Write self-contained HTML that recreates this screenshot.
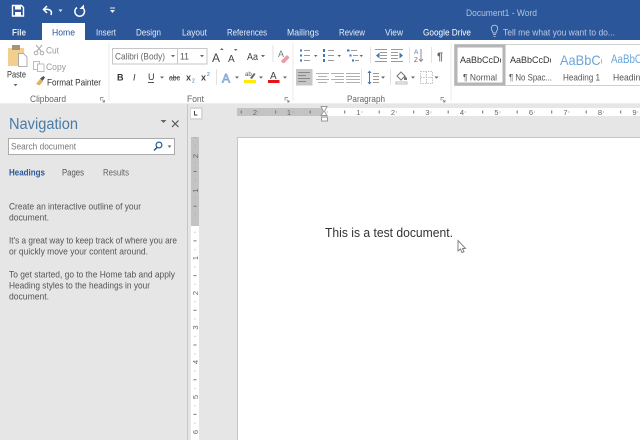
<!DOCTYPE html>
<html><head><meta charset="utf-8"><style>
html,body{margin:0;padding:0;width:640px;height:440px;overflow:hidden;background:#e6e6e6}
svg{display:block}
#r{filter:blur(.3px)}
text{font-family:"Liberation Sans",sans-serif;font-size:9px;fill:#444;white-space:pre}
.tab{fill:#e4ebf5;font-size:9.5px}
.g{fill:#666;font-size:9.500px}
.arr{fill:#666}
.rn{font-size:7.500px;fill:#666;text-anchor:middle}
.st{font-size:9.500px;fill:#555}
.nv{font-size:9.300px;fill:#555}
</style></head><body>
<svg id="r" width="640" height="440" viewBox="0 0 640 440" xmlns="http://www.w3.org/2000/svg">
<!-- backgrounds -->
<rect width="640" height="440" fill="#e6e6e6"/>
<rect width="640" height="40" fill="#2b579a"/>
<rect y="40" width="640" height="64" fill="#fff"/>
<rect y="103" width="640" height="1" fill="#eee"/>
<!-- QAT -->
<path d="M12.500 5.500h9l2 2v8.500h-11z" fill="none" stroke="#fff" stroke-width="1.400"/>
<rect x="15" y="6" width="6" height="3.500" fill="#fff"/><rect x="15" y="12" width="6" height="4" fill="#fff"/>
<path d="M51 15c1.500-4-1-6.500-7-5.500M47 6l-3.500 3.500L47 13" fill="none" stroke="#fff" stroke-width="1.500"/>
<path d="M58.500 9.500h4l-2 2.500z" fill="#e4ebf5"/>
<path d="M77 7.500a4.800 4.800 0 1 0 6 0.500" fill="none" stroke="#fff" stroke-width="1.500"/><path d="M84 4.500v4.500h-4.500z" fill="#fff"/>
<rect x="110" y="7.500" width="5" height="1" fill="#e4ebf5"/><path d="M110 10h5l-2.500 3z" fill="#e4ebf5"/>
<text x="466" y="16" textLength="71" lengthAdjust="spacingAndGlyphs" style="fill:#afc1dd;font-size:9.500px">Document1 - Word</text>
<!-- Tabs -->
<rect x="42" y="23" width="43" height="18" fill="#fff"/>
<text class="tab" x="12" y="35.500" textLength="14" lengthAdjust="spacingAndGlyphs" style="font-weight:bold">File</text>
<text x="52" y="35.500" textLength="23" lengthAdjust="spacingAndGlyphs" style="fill:#2b579a;font-size:9.500px">Home</text>
<text class="tab" x="96" y="35.500" textLength="20" lengthAdjust="spacingAndGlyphs">Insert</text>
<text class="tab" x="136" y="35.500" textLength="25" lengthAdjust="spacingAndGlyphs">Design</text>
<text class="tab" x="182" y="35.500" textLength="25" lengthAdjust="spacingAndGlyphs">Layout</text>
<text class="tab" x="227" y="35.500" textLength="40" lengthAdjust="spacingAndGlyphs">References</text>
<text class="tab" x="287" y="35.500" textLength="32" lengthAdjust="spacingAndGlyphs">Mailings</text>
<text class="tab" x="339" y="35.500" textLength="26" lengthAdjust="spacingAndGlyphs">Review</text>
<text class="tab" x="385" y="35.500" textLength="18" lengthAdjust="spacingAndGlyphs">View</text>
<text x="423" y="35.500" textLength="48" lengthAdjust="spacingAndGlyphs" style="fill:#fff;font-size:9.500px">Google Drive</text>
<path d="M493 34.500h3M493.500 36.500h2M493 33c0-2-1.700-2.500-1.700-4.700a3.200 3.200 0 0 1 6.400 0c0 2.200-1.700 2.700-1.700 4.700z" fill="none" stroke="#c5d3e8" stroke-width=".8"/>
<text x="503" y="35.500" textLength="112" lengthAdjust="spacingAndGlyphs" style="fill:#b9c9e0;font-size:9.500px">Tell me what you want to do...</text>

<!-- Clipboard group -->
<rect x="8" y="48" width="16" height="18" fill="#f3cf8e"/>
<rect x="12" y="45" width="8" height="5" fill="#a39579"/>
<path d="M18.500 53.500h5l3.500 3.500v9.500h-8.500z" fill="#fff" stroke="#999" stroke-width=".8"/>
<text x="7" y="77.500" textLength="19" lengthAdjust="spacingAndGlyphs" style="fill:#333;font-size:9.500px">Paste</text>
<path d="M13.500 84h4l-2 2.200z" class="arr"/>
<g fill="none" stroke="#aaa" stroke-width="1"><circle cx="36" cy="53" r="1.800"/><circle cx="42" cy="53" r="1.800"/><path d="M37 51l5-6M41 51l-5-6"/></g>
<text x="46" y="53.500" textLength="13" lengthAdjust="spacingAndGlyphs" style="fill:#999;font-size:9.500px">Cut</text>
<g fill="#fff" stroke="#b5b5b5" stroke-width=".9"><rect x="33.500" y="61.500" width="6" height="8"/><rect x="37.500" y="64" width="6.500" height="7.500"/></g>
<text x="46" y="70" textLength="20" lengthAdjust="spacingAndGlyphs" style="fill:#999;font-size:9.500px">Copy</text>
<path d="M36 84l4-5 3 2.500-3.500 4z" fill="#e2b25c"/><path d="M40 78.500l3.500-2.500 1.500 1.500-2.500 3.500z" fill="#555"/>
<text x="47" y="85.500" textLength="54" lengthAdjust="spacingAndGlyphs" style="fill:#333;font-size:9.500px">Format Painter</text>
<text class="g" x="30" y="102" textLength="36" lengthAdjust="spacingAndGlyphs">Clipboard</text>
<path d="M100.500 100.500v-3h3M102 99.500l2.500 2.500M104.500 100v2h-2" fill="none" stroke="#777" stroke-width=".7"/>
<rect x="108.500" y="43" width="1" height="58" fill="#e8e8e8"/>

<!-- Font group -->
<rect x="112.500" y="48.500" width="65" height="15.500" fill="#fff" stroke="#c6c6c6"/>
<rect x="177.500" y="48.500" width="29.500" height="15.500" fill="#fff" stroke="#c6c6c6"/>
<text x="115" y="59.500" textLength="50" lengthAdjust="spacingAndGlyphs" style="fill:#666;font-size:9.500px">Calibri (Body)</text>
<path d="M171 55h4l-2 2.200z" class="arr"/>
<text x="180" y="59.500" textLength="9" lengthAdjust="spacingAndGlyphs" style="fill:#555;font-size:9.500px">11</text>
<path d="M200 55h4l-2 2.200z" class="arr"/>
<text x="212" y="62" style="font-size:12px;fill:#444">A</text><path d="M220 50l1.800-2 1.800 2z" fill="#2b6cb0"/>
<text x="228" y="62" style="font-size:10px;fill:#444">A</text><path d="M234 49h3.500l-1.800 2z" fill="#2b6cb0"/>
<text x="247" y="60" textLength="11" lengthAdjust="spacingAndGlyphs" style="font-size:10px;fill:#444">Aa</text>
<path d="M261 55h4l-2 2.200z" class="arr"/>
<rect x="272.500" y="45" width="1" height="17" fill="#e2e2e2"/>
<text x="278" y="57" style="font-size:9px;fill:#777">A</text><path d="M281 61l6-6 2.500 2.500-5 5.500h-2z" fill="#ec9aa2"/>
<text x="117" y="80.500" style="font-size:9px;font-weight:bold;fill:#333">B</text>
<text x="133" y="80.500" style="font-size:9px;font-style:italic;fill:#333">I</text>
<text x="148" y="80" style="font-size:9px;fill:#333">U</text><rect x="148" y="82" width="6" height="1" fill="#555"/>
<path d="M160 76.500h4l-2 2.200z" class="arr"/>
<text x="169" y="80.500" textLength="11" lengthAdjust="spacingAndGlyphs" style="fill:#444;font-size:8.500px;text-decoration:line-through">abc</text>
<text x="186" y="80.500" style="font-weight:bold;fill:#444">x</text><text x="192" y="82.500" style="font-size:5px;fill:#2b6cb0">2</text>
<text x="201" y="80.500" style="font-weight:bold;fill:#444">x</text><text x="207" y="76" style="font-size:5px;fill:#2b6cb0">2</text>
<rect x="216" y="69" width="1" height="16" fill="#e2e2e2"/>
<text x="222" y="82.500" style="font-size:12px;fill:#e6eff9;stroke:#6f9cd0;stroke-width:.7">A</text>
<path d="M235 76.500h4l-2 2.200z" class="arr"/>
<text x="245" y="76" style="font-size:6px;fill:#555">ab</text><path d="M250 78l4-5 1.500 1-3.500 5z" fill="#666"/><rect x="244" y="80" width="12" height="3" fill="#ffea00"/>
<path d="M259 76.500h4l-2 2.200z" class="arr"/>
<text x="270" y="79" style="font-size:10px;fill:#444">A</text><rect x="268" y="80" width="11.500" height="3" fill="#e5141b"/>
<path d="M283 76.500h4l-2 2.200z" class="arr"/>
<text class="g" x="187" y="102" textLength="17" lengthAdjust="spacingAndGlyphs">Font</text>
<path d="M285 100.500v-3h3M286.500 99.500l2.500 2.500M289 100v2h-2" fill="none" stroke="#777" stroke-width=".7"/>
<rect x="292.500" y="43" width="1" height="58" fill="#e8e8e8"/>

<!-- Paragraph group -->
<g stroke="#999" stroke-width="1">
<path d="M304 50.500h6M304 55.500h6M304 60.500h6"/>
<path d="M328 50.500h6M328 55.500h6M328 60.500h6"/>
<path d="M351 50.500h6M353 55.500h5M355 60.500h4"/>
<path d="M375 49.500h12M380 52.500h7M380 55.500h7M380 58.500h7M375 61.500h12"/>
<path d="M391 49.500h12M391 52.500h7M391 55.500h7M391 58.500h7M391 61.500h12"/>
</g>
<g fill="#3b78b8"><rect x="300" y="49.500" width="2" height="2"/><rect x="300" y="54.500" width="2" height="2"/><rect x="300" y="59.500" width="2" height="2"/>
<rect x="323" y="49" width="2" height="3"/><rect x="323" y="54" width="2" height="3"/><rect x="323" y="59" width="2" height="3"/>
<rect x="347" y="49.500" width="2.500" height="2"/><rect x="349.500" y="54.500" width="2" height="2"/><rect x="352" y="59.500" width="2" height="2"/>
<path d="M376 55.500l3.500-3v6zM403 55.500l-3.500-3v6z"/></g>
<path d="M314 55h3.500l-1.800 2zM337.500 55h3.500l-1.800 2zM359.500 55h3.500l-1.800 2z" class="arr"/>
<rect x="370" y="47" width="1" height="16" fill="#e2e2e2"/><rect x="409" y="47" width="1" height="16" fill="#e2e2e2"/><rect x="431" y="47" width="1" height="16" fill="#e2e2e2"/>
<text x="414" y="54" style="font-size:6.500px;fill:#3b78b8">A</text><text x="414" y="62" style="font-size:6.500px;fill:#c0392b">Z</text>
<path d="M421 49v12M419 59l2 2.500 2-2.500" fill="none" stroke="#888"/>
<text x="437" y="60" style="font-size:11px;font-weight:bold;fill:#666">¶</text>
<rect x="296" y="69" width="16.500" height="16.500" fill="#c6c6c6"/>
<g stroke="#888" stroke-width="1">
<path d="M298 72.500h12M298 75.500h8M298 78.500h12M298 81.500h8"/>
</g>
<g stroke="#b0b0b0" stroke-width="1">
<path d="M316 73.500h13M318 76.500h9M316 79.500h13M318 82.500h9"/>
<path d="M331 73.500h13M335 76.500h9M331 79.500h13M335 82.500h9"/>
<path d="M346 73.500h14M346 76.500h14M346 79.500h14M346 82.500h14"/>
</g>
<rect x="361" y="69" width="1" height="16" fill="#e2e2e2"/>
<path d="M369.500 71v13" stroke="#3b78b8" fill="none"/><path d="M367.500 73l2-2.500 2 2.500zM367.500 82l2 2.500 2-2.500z" fill="#3b78b8"/>
<path d="M373 73.500h6M373 76.500h6M373 79.500h6M373 82.500h6" stroke="#999"/>
<path d="M381 76.500h4l-2 2.200z" class="arr"/>
<rect x="390" y="69" width="1" height="16" fill="#e2e2e2"/>
<path d="M397 76l4-4 4 4-4 4z" fill="#fff" stroke="#777"/><path d="M404 75l3 3v2h-3z" fill="#777"/><rect x="396" y="82" width="11" height="2" fill="none" stroke="#aaa" stroke-width=".8"/>
<path d="M411 76.500h4l-2 2.200z" class="arr"/>
<path d="M420.500 71.500h12v12h-12zM426.500 71.500v12M420.500 77.500h12" fill="none" stroke="#c2c2c2" stroke-dasharray="1.500 1"/>
<path d="M434.500 76.500h4l-2 2.200z" class="arr"/>
<text class="g" x="347" y="102" textLength="38" lengthAdjust="spacingAndGlyphs">Paragraph</text>
<path d="M441 100.500v-3h3M442.500 99.500l2.500 2.500M445 100v2h-2" fill="none" stroke="#777" stroke-width=".7"/>
<rect x="450.500" y="43" width="1" height="58" fill="#e8e8e8"/>

<!-- Styles gallery -->
<rect x="454.500" y="44.500" width="190" height="41" fill="#fff" stroke="#d0d0d0"/>
<rect x="456" y="46" width="48" height="38" fill="#fff" stroke="#b5b5b5" stroke-width="3"/>
<svg x="460" y="50" width="41" height="20"><text x="0" y="13" textLength="44" lengthAdjust="spacingAndGlyphs" style="font-size:9.500px;fill:#333">AaBbCcDc</text></svg>
<text class="st" x="463" y="80.500" textLength="34" lengthAdjust="spacingAndGlyphs">¶ Normal</text>
<svg x="510" y="50" width="41" height="20"><text x="0" y="13" textLength="44" lengthAdjust="spacingAndGlyphs" style="font-size:9.500px;fill:#333">AaBbCcDc</text></svg>
<text class="st" x="509" y="80.500" textLength="43" lengthAdjust="spacingAndGlyphs">¶ No Spac...</text>
<svg x="560" y="48" width="42" height="24"><text x="0" y="17" textLength="47" lengthAdjust="spacingAndGlyphs" style="font-size:14px;fill:#6aa5da">AaBbCc</text></svg>
<text class="st" x="563" y="80.500" textLength="37" lengthAdjust="spacingAndGlyphs">Heading 1</text>
<svg x="611" y="48" width="29" height="24"><text x="0" y="15" textLength="31" lengthAdjust="spacingAndGlyphs" style="font-size:11.500px;fill:#6aa5da">AaBbC</text></svg>
<text class="st" x="613" y="80.500" textLength="32" lengthAdjust="spacingAndGlyphs">Heading</text>

<!-- Nav pane -->
<rect x="187" y="104" width="1" height="336" fill="#c6c6c6"/>
<text x="9" y="129" textLength="69" lengthAdjust="spacingAndGlyphs" style="font-size:15.500px;fill:#4a7ba7">Navigation</text>
<path d="M160.500 120h6l-3 3z" fill="#666"/>
<path d="M172 120.500l6.500 6.500M178.500 120.500l-6.500 6.500" stroke="#555" stroke-width="1.200"/>
<rect x="8.500" y="138.500" width="166" height="16" fill="#fff" stroke="#ababab"/>
<text x="11" y="149.500" textLength="65" lengthAdjust="spacingAndGlyphs" style="fill:#777;font-size:9.300px">Search document</text>
<circle cx="159" cy="145" r="2.900" fill="none" stroke="#2b579a" stroke-width="1.200"/><path d="M157 147.500l-3 3" stroke="#2b579a" stroke-width="1.500"/>
<path d="M167.500 145.500h4l-2 2.200z" class="arr"/>
<text x="9" y="175.500" textLength="36" lengthAdjust="spacingAndGlyphs" style="font-weight:bold;fill:#2b579a;font-size:9.300px">Headings</text>
<text x="62" y="175.500" textLength="22" lengthAdjust="spacingAndGlyphs" style="fill:#555;font-size:9.300px">Pages</text>
<text x="103" y="175.500" textLength="26" lengthAdjust="spacingAndGlyphs" style="fill:#666;font-size:9.300px">Results</text>
<text class="nv" x="9" y="209.500" textLength="132" lengthAdjust="spacingAndGlyphs">Create an interactive outline of your</text>
<text class="nv" x="9" y="220.500" textLength="40" lengthAdjust="spacingAndGlyphs">document.</text>
<text class="nv" x="9" y="243.500" textLength="168" lengthAdjust="spacingAndGlyphs">It's a great way to keep track of where you are</text>
<text class="nv" x="9" y="254.500" textLength="139" lengthAdjust="spacingAndGlyphs">or quickly move your content around.</text>
<text class="nv" x="9" y="277.500" textLength="166" lengthAdjust="spacingAndGlyphs">To get started, go to the Home tab and apply</text>
<text class="nv" x="9" y="288.500" textLength="141" lengthAdjust="spacingAndGlyphs">Heading styles to the headings in your</text>
<text class="nv" x="9" y="299.500" textLength="40" lengthAdjust="spacingAndGlyphs">document.</text>

<!-- Ruler corner -->
<rect x="188" y="104" width="50" height="336" fill="#e6e6e6"/>
<rect x="190" y="107" width="13" height="13" fill="#d8d8d8"/>
<rect x="191" y="109" width="10" height="9" fill="#fff"/>
<path d="M194.500 111v4h3" fill="none" stroke="#444"/>

<!-- Horizontal ruler -->
<rect x="237" y="108" width="87" height="8" fill="#c3c3c3"/>
<rect x="324" y="108" width="316" height="8" fill="#fff"/>
<line x1="237" x2="640" y1="112" y2="112" stroke="#999" stroke-width="1" stroke-dasharray="1 16.250" stroke-dashoffset="-3.600"/>
<line x1="237" x2="640" y1="112" y2="112" stroke="#777" stroke-width="3" stroke-dasharray="1 33.500" stroke-dashoffset="-3.700"/>
<g>
<text class="rn" x="255" y="115">2</text><text class="rn" x="289" y="115">1</text>
<text class="rn" x="358.500" y="115">1</text><text class="rn" x="393" y="115">2</text><text class="rn" x="427.500" y="115">3</text>
<text class="rn" x="462" y="115">4</text><text class="rn" x="496.500" y="115">5</text><text class="rn" x="531" y="115">6</text>
<text class="rn" x="565.500" y="115">7</text><text class="rn" x="600" y="115">8</text><text class="rn" x="634.500" y="115">9</text>
</g>
<path d="M321 106.500h6l-2.500 5 2.500 4h-6l2.500-4z" fill="#fff" stroke="#999"/>
<rect x="321.500" y="117" width="6" height="4" fill="#fff" stroke="#999"/>

<!-- Vertical ruler -->
<rect x="191" y="137" width="8" height="89" fill="#c3c3c3"/>
<rect x="191" y="226" width="8" height="214" fill="#fff"/>
<line x1="195" x2="195" y1="137" y2="440" stroke="#aaa" stroke-width="1" stroke-dasharray="1 16.350" stroke-dashoffset="-8"/>
<line x1="195" x2="195" y1="137" y2="440" stroke="#777" stroke-width="3" stroke-dasharray="1 33.700" stroke-dashoffset="-34"/>
<g>
<text class="rn" transform="translate(198 156) rotate(-90)">2</text>
<text class="rn" transform="translate(198 190.500) rotate(-90)">1</text>
<text class="rn" transform="translate(198 258) rotate(-90)">1</text>
<text class="rn" transform="translate(198 293) rotate(-90)">2</text>
<text class="rn" transform="translate(198 327.500) rotate(-90)">3</text>
<text class="rn" transform="translate(198 362) rotate(-90)">4</text>
<text class="rn" transform="translate(198 397) rotate(-90)">5</text>
<text class="rn" transform="translate(198 432) rotate(-90)">6</text>
</g>

<!-- Page -->
<rect x="237.500" y="137.500" width="410" height="310" fill="#fff" stroke="#c6c6c6"/>
<text x="325" y="237" textLength="128" lengthAdjust="spacingAndGlyphs" style="font-size:12.500px;fill:#333">This is a test document.</text>
<path d="M458 240.500v10.500l2.500-2 1.500 3.500 2-.8-1.500-3.300h3z" fill="#fff" stroke="#777" stroke-width=".9"/>
</svg>
</body></html>
